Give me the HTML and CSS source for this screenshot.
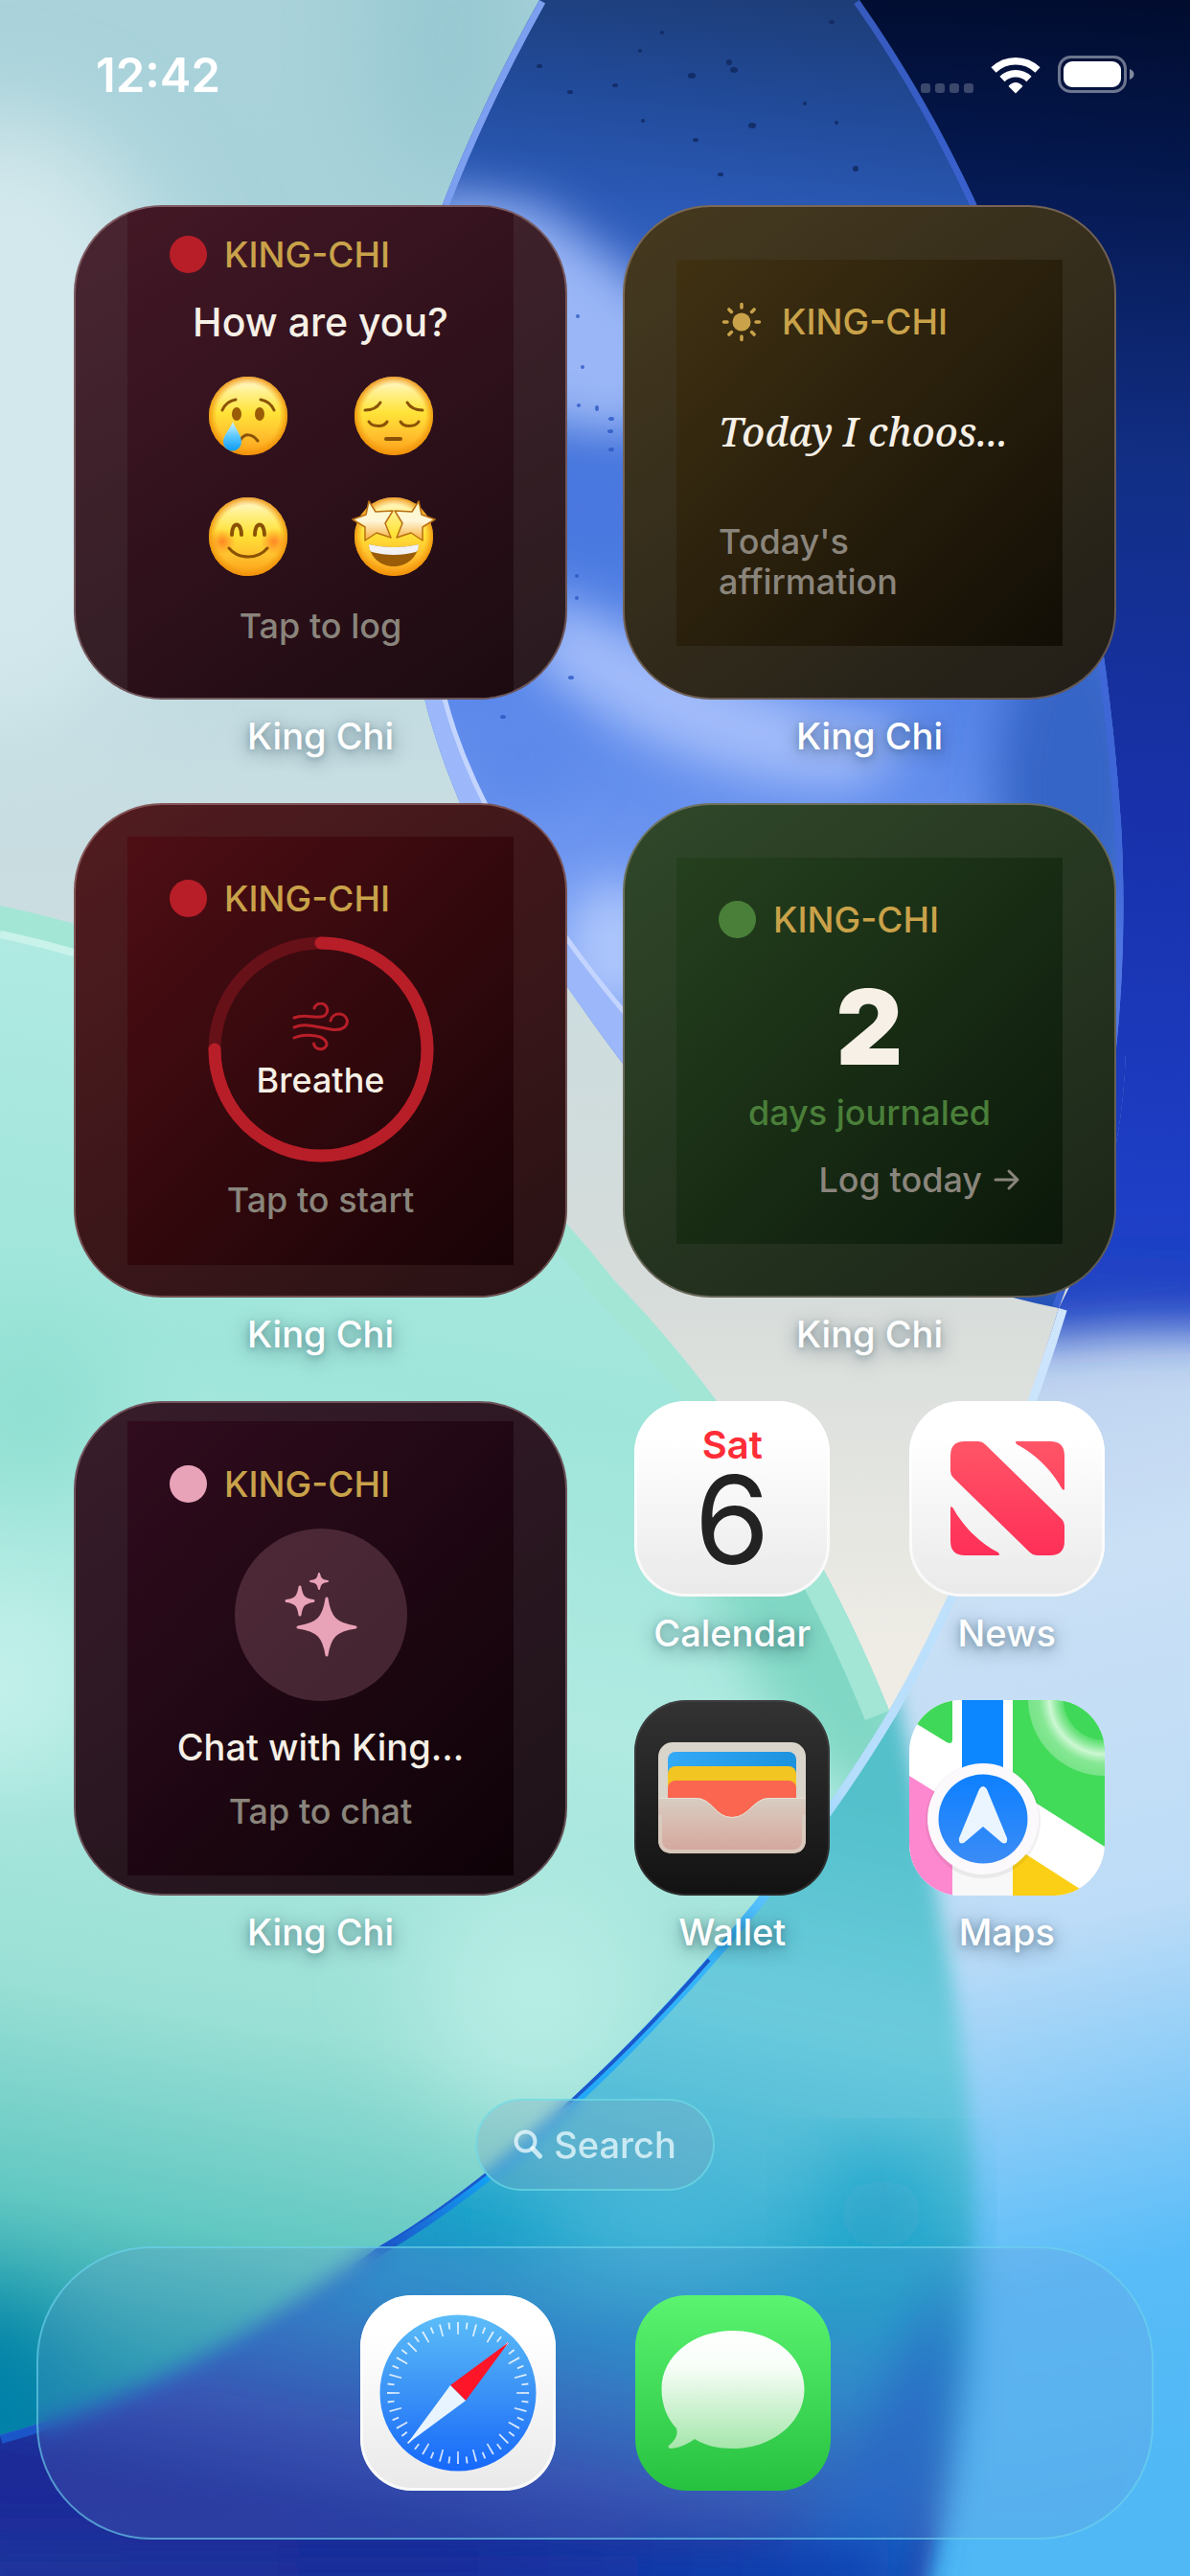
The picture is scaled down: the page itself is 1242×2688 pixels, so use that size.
FILE: index.html
```
<!DOCTYPE html>
<html lang="en">
<head>
  <meta charset="UTF-8" />
  <meta name="viewport" content="width=device-width, initial-scale=1.0"/>
  <title>Home Screen</title>
  <link rel="stylesheet" href="styles.css">
</head>
<body>

<!-- Wallpaper -->
<svg class="wallpaper" viewBox="0 0 1242 2688" preserveAspectRatio="xMidYMid slice" aria-hidden="true">
  <defs>
    <linearGradient id="sky" x1="0" y1="0" x2="0" y2="1">
      <stop offset="0" stop-color="#a9d2da"/>
      <stop offset="0.08" stop-color="#a8d2da"/>
      <stop offset="0.3" stop-color="#c6dde2"/>
      <stop offset="0.5" stop-color="#d6dcda"/>
      <stop offset="0.64" stop-color="#eeece5"/>
    </linearGradient>
    <linearGradient id="leaf" gradientUnits="userSpaceOnUse" x1="840" y1="0" x2="700" y2="1360">
      <stop offset="0" stop-color="#1d3d78"/>
      <stop offset="0.08" stop-color="#214a98"/>
      <stop offset="0.16" stop-color="#2a58b4"/>
      <stop offset="0.26" stop-color="#3a68cc"/>
      <stop offset="0.38" stop-color="#4676dc"/>
      <stop offset="0.55" stop-color="#5a88ea"/>
      <stop offset="0.75" stop-color="#7ba0f4"/>
      <stop offset="1" stop-color="#1a48b0"/>
    </linearGradient>
    <linearGradient id="night" gradientUnits="userSpaceOnUse" x1="1242" y1="0" x2="1160" y2="1400">
      <stop offset="0" stop-color="#010c2e"/>
      <stop offset="0.12" stop-color="#04174c"/>
      <stop offset="0.35" stop-color="#122f86"/>
      <stop offset="0.6" stop-color="#1831aa"/>
      <stop offset="0.9" stop-color="#1d3ec6"/>
      <stop offset="1" stop-color="#2449c4"/>
    </linearGradient>
    <linearGradient id="ice" gradientUnits="userSpaceOnUse" x1="1000" y1="1400" x2="1260" y2="2600">
      <stop offset="0" stop-color="#bcd0ee"/>
      <stop offset="0.2" stop-color="#cae0f5"/>
      <stop offset="0.5" stop-color="#bddcf7"/>
      <stop offset="0.8" stop-color="#58bcf8"/>
      <stop offset="1" stop-color="#4fb8f5"/>
    </linearGradient>
    <linearGradient id="mint" gradientUnits="userSpaceOnUse" x1="420" y1="950" x2="130" y2="2540">
      <stop offset="0" stop-color="#b4ebe4"/>
      <stop offset="0.3" stop-color="#9fe5da"/>
      <stop offset="0.5" stop-color="#b0eae1"/>
      <stop offset="0.72" stop-color="#9be0d6"/>
      <stop offset="0.86" stop-color="#62c8c2"/>
      <stop offset="0.95" stop-color="#24a0b0"/>
      <stop offset="1" stop-color="#0a84a8"/>
    </linearGradient>
    <linearGradient id="orb" gradientUnits="userSpaceOnUse" x1="800" y1="1850" x2="620" y2="2688">
      <stop offset="0" stop-color="#52c0ca"/>
      <stop offset="0.28" stop-color="#6ccbdd"/>
      <stop offset="0.48" stop-color="#4db9d6"/>
      <stop offset="0.6" stop-color="#1ca2c9"/>
      <stop offset="0.72" stop-color="#2387c8"/>
      <stop offset="0.9" stop-color="#2a45ac"/>
      <stop offset="1" stop-color="#1a2c98"/>
    </linearGradient>
    <linearGradient id="edge" gradientUnits="userSpaceOnUse" x1="1100" y1="1360" x2="400" y2="2344">
      <stop offset="0" stop-color="#cfe6fc"/>
      <stop offset="0.45" stop-color="#b4ddfc"/>
      <stop offset="0.6" stop-color="#3db8fb"/>
      <stop offset="0.9" stop-color="#12a0f4"/>
      <stop offset="1" stop-color="#1b56c8"/>
    </linearGradient>
    <linearGradient id="floor" x1="0" y1="0" x2="1" y2="0">
      <stop offset="0" stop-color="#1e389c"/>
      <stop offset="0.5" stop-color="#182c9a"/>
      <stop offset="1" stop-color="#0a47b6"/>
    </linearGradient>
    <filter id="soft10" x="-50%" y="-50%" width="200%" height="200%"><feGaussianBlur stdDeviation="10"/></filter>
    <filter id="soft25" x="-50%" y="-50%" width="200%" height="200%"><feGaussianBlur stdDeviation="25"/></filter>
    <filter id="soft50" x="-50%" y="-50%" width="200%" height="200%"><feGaussianBlur stdDeviation="50"/></filter>
    <clipPath id="leafClip"><path d="M563 0C520 77 487 148 462 213C425 310 418 420 424 560C426 630 432 680 443 729C452 766 465 802 480 838C520 930 590 1030 650 1110C770 1250 930 1330 1105 1365C1160 1220 1180 1030 1170 860C1150 560 1080 260 897 0Z"/></clipPath>
    <clipPath id="mintClip"><path d="M0 945C260 1000 480 1130 640 1335C780 1480 870 1640 928 1785C800 2000 575 2240 396 2344C280 2430 150 2500 0 2541Z"/></clipPath>
    <clipPath id="lowClip"><path d="M1175 1100C1172 1200 1145 1290 1105 1365C1070 1480 1000 1660 928 1785C800 2000 575 2240 396 2344C280 2430 150 2500 0 2541V2688H1242V1100Z"/></clipPath>
  </defs>

  <rect width="1242" height="2688" fill="url(#sky)"/>
  <ellipse cx="0" cy="440" rx="200" ry="320" fill="#d3e8ec" filter="url(#soft50)"/>
  <ellipse cx="470" cy="40" rx="90" ry="160" fill="#98c9d2" filter="url(#soft50)"/>

  <path d="M890 0H1242V1200H1160Z" fill="url(#night)"/>

  <g clip-path="url(#leafClip)">
    <rect x="400" width="800" height="1380" fill="url(#leaf)"/>
    <path d="M450 200L560 215C620 260 690 300 740 380L660 460L560 440L420 300Z" fill="#9ab6f6" filter="url(#soft25)"/>
    <ellipse cx="625" cy="530" rx="70" ry="50" fill="#4a78e0" filter="url(#soft25)"/>
    <path d="M560 620C660 650 800 740 960 760L900 820C780 830 660 780 560 700Z" fill="#a2bcfa" filter="url(#soft25)"/>
    <ellipse cx="545" cy="790" rx="60" ry="50" fill="#5d89ea" filter="url(#soft25)"/>
    <ellipse cx="640" cy="990" rx="50" ry="70" fill="#adc6fc" filter="url(#soft25)"/>
    <ellipse cx="1120" cy="820" rx="80" ry="160" fill="#3565c6" filter="url(#soft25)"/>
    <path d="M563 0C520 77 487 148 462 213" fill="none" stroke="#7d9ff0" stroke-width="14"/>
    <path d="M443 729L464 729C480 790 505 840 540 900C580 970 620 1020 660 1070L650 1110C590 1030 520 930 480 838C465 802 452 766 443 729Z" fill="#9cb7fa"/>
    <path d="M464 729C480 790 505 840 540 900C570 950 600 996 660 1066" fill="none" stroke="#c3d5ff" stroke-width="5"/>
    <path d="M1105 1365C1160 1220 1180 1030 1170 860C1150 560 1080 260 897 0" fill="none" stroke="#4267dc" stroke-width="14" opacity="0.7"/>
    <g fill="#10285f" opacity="0.8">
      <ellipse cx="563" cy="69" rx="3" ry="2"/>
      <ellipse cx="595" cy="96" rx="3" ry="2"/>
      <ellipse cx="642" cy="89" rx="3" ry="2"/>
      <ellipse cx="668" cy="53" rx="2" ry="2"/>
      <ellipse cx="691" cy="34" rx="2" ry="2"/>
      <ellipse cx="722" cy="79" rx="4" ry="3"/>
      <ellipse cx="761" cy="65" rx="3" ry="3"/>
      <ellipse cx="766" cy="73" rx="4" ry="3"/>
      <ellipse cx="785" cy="131" rx="4" ry="3"/>
      <ellipse cx="726" cy="146" rx="3" ry="2"/>
      <ellipse cx="752" cy="182" rx="3" ry="2"/>
      <ellipse cx="671" cy="126" rx="2" ry="2"/>
      <ellipse cx="840" cy="108" rx="2" ry="2"/>
      <ellipse cx="868" cy="23" rx="3" ry="2"/>
      <ellipse cx="873" cy="128" rx="2" ry="2"/>
      <ellipse cx="893" cy="176" rx="3" ry="3"/>
    </g>
    <g fill="#2d58c4" opacity="0.8">
      <ellipse cx="603" cy="330" rx="2" ry="2"/>
      <ellipse cx="608" cy="383" rx="2" ry="2"/>
      <ellipse cx="604" cy="423" rx="2" ry="2"/>
      <ellipse cx="623" cy="426" rx="2" ry="3"/>
      <ellipse cx="638" cy="437" rx="3" ry="2"/>
      <ellipse cx="637" cy="450" rx="3" ry="2"/>
      <ellipse cx="638" cy="469" rx="3" ry="2"/>
      <ellipse cx="602" cy="601" rx="2" ry="2"/>
      <ellipse cx="602" cy="624" rx="2" ry="2"/>
      <ellipse cx="596" cy="707" rx="3" ry="2"/>
      <ellipse cx="525" cy="748" rx="3" ry="2"/>
    </g>
  </g>

  <g clip-path="url(#mintClip)">
    <rect y="900" width="960" height="1680" fill="url(#mint)"/>
    <ellipse cx="30" cy="1470" rx="90" ry="90" fill="#8edfd1" filter="url(#soft50)"/>
    <ellipse cx="0" cy="1760" rx="90" ry="90" fill="#c5f1ec" filter="url(#soft50)"/>
    <ellipse cx="840" cy="1700" rx="70" ry="200" fill="#80d7c4" transform="rotate(-28 840 1700)" filter="url(#soft25)"/>
    <ellipse cx="560" cy="2080" rx="120" ry="120" fill="#b6ece4" filter="url(#soft50)"/>
    <ellipse cx="-20" cy="2500" rx="90" ry="100" fill="#0080a8" filter="url(#soft50)"/>
    <path d="M0 945C260 1000 480 1130 640 1335C780 1480 870 1640 928 1785" fill="none" stroke="#a3e6d6" stroke-width="54"/>
    <path d="M0 975C30 981 60 989 90 998" fill="none" stroke="#c9f3ea" stroke-width="8"/>
  </g>

  <g clip-path="url(#lowClip)">
    <rect y="1100" width="1242" height="1588" fill="url(#ice)"/>
    <path d="M1000 1000H1400V1390H1180L1060 1400Z" fill="url(#night)" filter="url(#soft25)"/>
    <rect x="1000" y="1090" width="300" height="200" fill="url(#night)"/>
    <path d="M0 2300L930 1740C985 2000 1025 2200 1015 2360C1008 2500 985 2620 960 2720H-60Z" fill="url(#orb)" filter="url(#soft10)"/>
    <path d="M800 2688C880 2600 950 2480 990 2340L990 2480L945 2720Z" fill="#1660c4" filter="url(#soft25)"/>
    <ellipse cx="920" cy="2310" rx="60" ry="50" fill="#0899c4" filter="url(#soft50)"/>
    <ellipse cx="690" cy="2320" rx="130" ry="50" fill="#4fbadc" filter="url(#soft50)"/>
    <path d="M-60 2650H930L920 2760H-60Z" fill="url(#floor)" filter="url(#soft25)"/>
    <path d="M1105 1365C1070 1480 1000 1660 928 1785C800 2000 575 2240 396 2344C280 2430 150 2500 0 2541" fill="none" stroke="url(#edge)" stroke-width="18"/>
    <path d="M740 2045C640 2160 510 2278 396 2344C280 2430 150 2500 0 2541" fill="none" stroke="#1c58cc" stroke-width="4"/>
  </g>
</svg>

<div class="screen">
  <header class="status-bar">
    <time class="clock">12:42</time>
    <div class="status-icons">
      <svg width="55" height="40" viewBox="0 0 55 40" aria-label="No signal">
        <g fill="#fff" opacity="0.22">
          <rect x="0" y="29" width="10" height="10" rx="3"/>
          <rect x="15" y="29" width="10" height="10" rx="3"/>
          <rect x="30" y="29" width="10" height="10" rx="3"/>
          <rect x="45" y="29" width="10" height="10" rx="3"/>
        </g>
      </svg>
      <svg width="52" height="40" viewBox="0 0 52 40" aria-label="Wi-Fi">
        <g fill="none" stroke="#fff" stroke-width="7.5">
          <path d="M3 15A33 33 0 0 1 49 15"/>
          <path d="M12 24.500A20 20 0 0 1 40 24.500"/>
        </g>
        <path d="M26 39.500L18.500 32Q22 28 26 28Q30 28 33.500 32Z" fill="#fff"/>
      </svg>
      <svg width="80" height="40" viewBox="0 0 80 40" aria-label="Battery full">
        <rect x="1.500" y="1.500" width="69" height="36" rx="12" fill="none" stroke="#fff" stroke-width="3" opacity="0.42"/>
        <rect x="6" y="6" width="60" height="27" rx="9" fill="#fff"/>
        <path d="M75 14C78 15 79.500 17 79.500 19.500C79.500 22 78 24 75 25Z" fill="#fff" opacity="0.5"/>
      </svg>
    </div>
  </header>

  <main class="apps">
    <!-- Mood widget -->
    <section class="tile tile-wide">
      <div class="widget widget-mood">
        <div class="widget-body">
          <div class="brand"><span class="dot dot-red"></span><span>KING-CHI</span></div>
          <div class="title">How are you?</div>
          <div class="moods">
            <button class="mood" type="button" aria-label="Sad">
              <svg width="88" height="88" viewBox="0 0 88 88">
                <defs>
                  <linearGradient id="face" x1="0" y1="0" x2="0" y2="1">
                    <stop offset="0" stop-color="#fffbe0"/>
                    <stop offset="0.2" stop-color="#fff08c"/>
                    <stop offset="0.46" stop-color="#ffe338"/>
                    <stop offset="0.75" stop-color="#ffc02e"/>
                    <stop offset="1" stop-color="#fb9d15"/>
                  </linearGradient>
                  <radialGradient id="faceEdge">
                    <stop offset="0.8" stop-color="#f49a0c" stop-opacity="0"/>
                    <stop offset="1" stop-color="#ee8f08" stop-opacity="0.9"/>
                  </radialGradient>
                  <linearGradient id="tear" x1="0" y1="0" x2="0" y2="1">
                    <stop offset="0" stop-color="#d3f3ff"/>
                    <stop offset="0.5" stop-color="#5cc8ff"/>
                    <stop offset="1" stop-color="#0d9cf5"/>
                  </linearGradient>
                </defs>
                <circle cx="44" cy="44" r="41" fill="url(#face)"/>
                <circle cx="44" cy="44" r="41" fill="url(#faceEdge)"/>
                <g fill="none" stroke="#8a5206" stroke-width="3" stroke-linecap="round">
                  <path d="M17 38C20 31 25 28 31 27"/>
                  <path d="M57 27C63 28 68 31 71 38"/>
                  <path d="M36 69C40 62 48 62 54 70"/>
                </g>
                <ellipse cx="32" cy="42" rx="5" ry="7" fill="#9a5c06"/>
                <ellipse cx="56" cy="42" rx="5" ry="7" fill="#9a5c06"/>
                <path d="M28 50C31 58 37 64 37 71A9.500 9.500 0 0 1 18 71C18 64 25 58 28 50Z" fill="url(#tear)"/>
              </svg>
            </button>
            <button class="mood" type="button" aria-label="Pensive">
              <svg width="88" height="88" viewBox="0 0 88 88">
                <circle cx="44" cy="44" r="41" fill="url(#face)"/>
                <circle cx="44" cy="44" r="41" fill="url(#faceEdge)"/>
                <g fill="none" stroke="#8a5206" stroke-width="3" stroke-linecap="round">
                  <path d="M14 38C21 38 27 35 30 30"/>
                  <path d="M58 30C61 35 67 38 74 38"/>
                  <path d="M18 50C22 56 34 56 37 50"/>
                  <path d="M51 50C54 56 66 56 70 50"/>
                  <path d="M36 68H51" stroke-width="4"/>
                </g>
              </svg>
            </button>
            <button class="mood" type="button" aria-label="Happy">
              <svg width="88" height="88" viewBox="0 0 88 88">
                <defs>
                  <radialGradient id="blush">
                    <stop offset="0" stop-color="#ff6a1e" stop-opacity="0.75"/>
                    <stop offset="1" stop-color="#ff7a1e" stop-opacity="0"/>
                  </radialGradient>
                </defs>
                <circle cx="44" cy="44" r="41" fill="url(#face)"/>
                <circle cx="44" cy="44" r="41" fill="url(#faceEdge)"/>
                <circle cx="17" cy="49" r="14" fill="url(#blush)"/>
                <circle cx="71" cy="49" r="14" fill="url(#blush)"/>
                <g fill="none" stroke="#8a5206" stroke-linecap="round">
                  <path d="M27 42C27 28 37 28 37 42" stroke-width="4"/>
                  <path d="M51 42C51 28 61 28 61 42" stroke-width="4"/>
                  <path d="M24 56C34 68 54 68 64 56" stroke-width="3"/>
                </g>
              </svg>
            </button>
            <button class="mood" type="button" aria-label="Excited">
              <svg width="88" height="88" viewBox="0 0 88 88">
                <defs>
                  <linearGradient id="star" x1="0" y1="0" x2="0" y2="1">
                    <stop offset="0" stop-color="#fff9c8"/>
                    <stop offset="0.5" stop-color="#fff6d8"/>
                    <stop offset="1" stop-color="#f7ae3a"/>
                  </linearGradient>
                </defs>
                <circle cx="44" cy="44" r="41" fill="url(#face)"/>
                <circle cx="44" cy="44" r="41" fill="url(#faceEdge)"/>
                <path d="M18 52C35 56 53 56 70 52C69 65 58 75 44 75C30 75 19 65 18 52Z" fill="#9a5c06"/>
                <path d="M18 52C35 56 53 56 70 52C70 56 69 59 67 60C52 64 36 64 21 60C19 59 18 56 18 52Z" fill="#f2f2f5"/>
                <g fill="url(#star)" stroke="#b96f12" stroke-width="1.500" stroke-linejoin="round">
                  <path d="M18 7L25 18L43 17L35 30L41 45L26 40L14 48L14 34L1 26L15 21Z"/>
                  <path d="M70 7L63 18L45 17L53 30L47 45L62 40L74 48L74 34L87 26L73 21Z"/>
                </g>
              </svg>
            </button>
          </div>
          <div class="hint">Tap to log</div>
        </div>
      </div>
      <span class="label">King Chi</span>
    </section>

    <!-- Affirmation widget -->
    <a class="tile tile-wide" href="#affirmation">
      <div class="widget widget-affirmation">
        <div class="widget-body">
          <div class="brand">
            <svg width="48" height="44" viewBox="0 0 48 44" aria-hidden="true">
              <circle cx="24" cy="22" r="9.500" fill="#c9a24a"/>
              <g stroke="#c9a24a" stroke-width="3.500" stroke-linecap="round">
                <path d="M24 3.500V7M24 37V40.500M5.500 22H9M39 22H42.500M10.900 8.900L13.400 11.400M34.600 32.600L37.100 35.100M10.900 35.100L13.400 32.600M34.600 11.400L37.100 8.900"/>
              </g>
            </svg>
            <span>KING-CHI</span>
          </div>
          <div class="quote">Today I choos...</div>
          <div class="hint hint-left">Today's affirmation</div>
        </div>
      </div>
      <span class="label">King Chi</span>
    </a>

    <!-- Breathe widget -->
    <a class="tile tile-wide" href="#breathe">
      <div class="widget widget-breathe">
        <div class="widget-body">
          <div class="brand"><span class="dot dot-red"></span><span>KING-CHI</span></div>
          <div class="ring">
            <svg class="ring-track" width="236" height="236" viewBox="0 0 236 236" aria-hidden="true">
              <g fill="none" stroke="#b81e28" stroke-width="13">
                <circle cx="118" cy="118" r="111" opacity="0.35"/>
                <path d="M118 7A111 111 0 1 1 7 118" stroke-linecap="round"/>
              </g>
            </svg>
            <svg width="60" height="52" viewBox="0 0 60 52" aria-hidden="true">
              <g fill="none" stroke="#b81e28" stroke-width="3" stroke-linecap="round">
                <path d="M2 16C12 12 20 16 29 15A7 7 0 1 0 23 6"/>
                <path d="M2 26C14 21 27 26 40 28C51 30 57.500 26 57.500 19A9 9 0 0 0 40 19"/>
                <path d="M2 37C10 33 19 34 25 35C32 36 36 40 36 44A7 7 0 0 1 22.500 43"/>
              </g>
            </svg>
            <span class="ring-text">Breathe</span>
          </div>
          <div class="hint">Tap to start</div>
        </div>
      </div>
      <span class="label">King Chi</span>
    </a>

    <!-- Journal widget -->
    <a class="tile tile-wide" href="#journal">
      <div class="widget widget-journal">
        <div class="widget-body">
          <div class="brand"><span class="dot dot-green"></span><span>KING-CHI</span></div>
          <div class="streak">
            <span class="count">2</span>
            <span class="count-text">days journaled</span>
          </div>
          <div class="hint hint-right">
            <span>Log today</span>
            <svg width="28" height="24" viewBox="0 0 28 24" aria-hidden="true">
              <path d="M2 12H25M16 3L25 12L16 21" fill="none" stroke="#8a857c" stroke-width="3" stroke-linecap="round" stroke-linejoin="round"/>
            </svg>
          </div>
        </div>
      </div>
      <span class="label">King Chi</span>
    </a>

    <!-- Chat widget -->
    <a class="tile tile-wide" href="#chat">
      <div class="widget widget-chat">
        <div class="widget-body">
          <div class="brand"><span class="dot dot-pink"></span><span>KING-CHI</span></div>
          <div class="bubble">
            <svg width="80" height="88" viewBox="0 0 80 88" aria-hidden="true">
              <g fill="#e9a3b8" stroke="#e9a3b8" stroke-width="3" stroke-linejoin="round">
                <path d="M46 27C49 47 55 54 76 57C55 60 49 67 46 86C43 67 37 60 16 57C37 54 43 47 46 27Z"/>
                <path d="M18 15C19.500 25 22 28 32 29.500C22 31 19.500 34 18 44C16.500 34 14 31 4 29.500C14 28 16.500 25 18 15Z"/>
                <path d="M38 1C39 6.500 40.500 8 47 9C40.500 10 39 11.500 38 17C37 11.500 35.500 10 29 9C35.500 8 37 6.500 38 1Z" stroke-width="2"/>
              </g>
            </svg>
          </div>
          <div class="title title-small">Chat with King...</div>
          <div class="hint">Tap to chat</div>
        </div>
      </div>
      <span class="label">King Chi</span>
    </a>

    <a class="tile" href="#calendar">
      <div class="icon icon-light icon-calendar">
        <span class="day-name">Sat</span>
        <span class="day-number">6</span>
      </div>
      <span class="label">Calendar</span>
    </a>

    <a class="tile" href="#news">
      <div class="icon icon-light">
        <svg viewBox="0 0 204 204" aria-hidden="true">
          <defs>
            <linearGradient id="news" gradientUnits="userSpaceOnUse" x1="0" y1="42" x2="0" y2="161">
              <stop offset="0" stop-color="#ff5567"/>
              <stop offset="1" stop-color="#ff2f58"/>
            </linearGradient>
          </defs>
          <g fill="url(#news)">
            <path d="M58 42H72Q76 42 79 45L159 123Q162 126 162 130V146Q162 161 147 161H133Q129 161 126 158L46 80Q43 77 43 73V57Q43 42 58 42Z"/>
            <path d="M112 42H147Q162 42 162 57V92Q161 94 159 91C150 74 132 55 112 45Q110 42 112 42Z"/>
            <path d="M93 161H58Q43 161 43 146V111Q44 109 46 112C55 129 73 148 93 158Q95 161 93 161Z"/>
          </g>
        </svg>
      </div>
      <span class="label">News</span>
    </a>

    <a class="tile" href="#wallet">
      <div class="icon icon-wallet">
        <svg viewBox="0 0 204 204" aria-hidden="true">
          <defs>
            <linearGradient id="pocket" x1="0" y1="0" x2="0" y2="1">
              <stop offset="0" stop-color="#d8cdc2"/>
              <stop offset="0.5" stop-color="#d8b9ae"/>
              <stop offset="1" stop-color="#d3a69b"/>
            </linearGradient>
            <linearGradient id="cardBlue" x1="0" y1="0" x2="1" y2="0">
              <stop offset="0" stop-color="#33aaf6"/>
              <stop offset="1" stop-color="#1c92df"/>
            </linearGradient>
          </defs>
          <rect x="25" y="44" width="154" height="116" rx="15" fill="#dad5cb"/>
          <rect x="35" y="54" width="134" height="60" rx="8" fill="url(#cardBlue)"/>
          <rect x="35" y="69" width="134" height="60" rx="8" fill="#f3c522"/>
          <rect x="35" y="84" width="134" height="60" rx="8" fill="#fa664f"/>
          <path d="M25 102H64C82 102 84 122 102 122C120 122 124 102 141 102H179V145Q179 160 164 160H40Q25 160 25 145Z" fill="url(#pocket)"/>
          <path d="M26 102.500H64C82 102.500 84 122.500 102 122.500C120 122.500 124 102.500 141 102.500H178" fill="none" stroke="#e9ded3" stroke-width="1"/>
          <path d="M27 120V145Q27 158 40 158H164Q177 158 177 145V120" fill="none" stroke="#d9cec3" stroke-width="4" opacity="0.8"/>
        </svg>
      </div>
      <span class="label">Wallet</span>
    </a>

    <a class="tile" href="#maps">
      <div class="icon icon-maps">
        <svg viewBox="0 0 204 204" aria-hidden="true">
          <defs>
            <radialGradient id="halo">
              <stop offset="0.54" stop-color="#baf3c4" stop-opacity="0.2"/>
              <stop offset="0.72" stop-color="#d5f9da" stop-opacity="0.95"/>
              <stop offset="0.85" stop-color="#b2f0ba" stop-opacity="0.6"/>
              <stop offset="1" stop-color="#9aeaa6" stop-opacity="0.6"/>
            </radialGradient>
            <linearGradient id="pin" x1="0" y1="0" x2="0" y2="1">
              <stop offset="0" stop-color="#0d80ff"/>
              <stop offset="1" stop-color="#3b8cf6"/>
            </linearGradient>
          </defs>
          <rect width="204" height="204" fill="#fff"/>
          <path d="M0 0H45V41Q45 47 39 44L0 20Z" fill="#40d858"/>
          <rect x="55" width="43" height="90" fill="#0d87ff"/>
          <path d="M108 0H204V153L108 92Z" fill="#42da59"/>
          <circle cx="204" cy="-1" r="80" fill="url(#halo)"/>
          <circle cx="204" cy="-1" r="43" fill="#40d858"/>
          <path d="M0 79L45 107V204H0Z" fill="#fd88cf"/>
          <path d="M45 110H108V204H45Z" fill="#f8f8f8"/>
          <path d="M108 152L178 197V204H108Z" fill="#fbcf16"/>
          <circle cx="77" cy="126" r="60" fill="#000" opacity="0.06"/>
          <circle cx="77" cy="124" r="58" fill="#fbf9fc"/>
          <circle cx="77" cy="124" r="46.500" fill="url(#pin)"/>
          <path d="M73 93Q77 87 81 93L102 144Q103 151 97 149L77 132L57 149Q51 151 52 144Z" fill="#eaf5ff"/>
        </svg>
      </div>
      <span class="label">Maps</span>
    </a>
  </main>

  <button class="search" type="button">
    <svg width="30" height="32" viewBox="0 0 30 32" aria-hidden="true">
      <g fill="none" stroke="currentColor" stroke-width="4" stroke-linecap="round">
        <circle cx="12.500" cy="12.500" r="10"/>
        <path d="M20 20L27.500 28" stroke-width="5"/>
      </g>
    </svg>
    <span>Search</span>
  </button>

  <nav class="dock" aria-label="Dock">
    <a class="icon icon-light" href="#safari" aria-label="Safari">
      <svg viewBox="0 0 204 204" aria-hidden="true">
        <defs>
          <linearGradient id="compass" x1="0" y1="0" x2="0" y2="1">
            <stop offset="0" stop-color="#5cbdf8"/>
            <stop offset="0.5" stop-color="#3a92f6"/>
            <stop offset="1" stop-color="#1668fb"/>
          </linearGradient>
        </defs>
        <circle cx="102" cy="102" r="81.500" fill="url(#compass)"/>
        <g fill="none" stroke="#fff" opacity="0.8">
          <circle cx="102" cy="102" r="67.500" stroke-width="13" pathLength="240" stroke-dasharray="1 9" stroke-dashoffset="0.5"/>
          <circle cx="102" cy="102" r="70.500" stroke-width="7" pathLength="240" stroke-dasharray="1 9" stroke-dashoffset="5.500"/>
        </g>
        <path d="M155 49L110 110L94 94Z" fill="#ff1528"/>
        <path d="M49 155L94 94L110 110Z" fill="#e8f4ff"/>
      </svg>
    </a>
    <a class="icon icon-messages" href="#messages" aria-label="Messages">
      <svg viewBox="0 0 204 204" aria-hidden="true">
        <defs>
          <linearGradient id="chat" x1="0" y1="0" x2="0" y2="1">
            <stop offset="0" stop-color="#fff"/>
            <stop offset="0.3" stop-color="#f8fef8"/>
            <stop offset="1" stop-color="#a5e6ab"/>
          </linearGradient>
        </defs>
        <path d="M102 37C143 37 176.500 63 176.500 98C176.500 133 143 160 102 160C87 160 73 157 62 150C54 156 44 160 36 160Q33 158 36 156C42 151 45 145 43 139C33 128 27.500 114 27.500 98C27.500 63 61 37 102 37Z" fill="url(#chat)"/>
      </svg>
    </a>
  </nav>
</div>

</body>
</html>
```
FILE: styles.css
```
* { box-sizing: border-box; }
body {
  margin: 0;
  position: relative;
  min-height: 100vh;
  overflow-x: hidden;
  background: #1c2f9a;
  font-family: Inter, "Liberation Sans", sans-serif;
  font-weight: 500;
  color: #fff;
}
a { color: inherit; text-decoration: none; }
svg { display: block; }

.wallpaper {
  position: absolute; top: 0; left: 0; z-index: -1;
  width: 100%; height: 100%;
}
.screen {
  display: flex; flex-direction: column; align-items: center;
  min-height: 100vh;
  padding: 0 38px 38px;
}

/* Status bar */
.status-bar {
  display: flex; justify-content: space-between; align-items: center;
  width: 100%; height: 156px;
  padding: 0 20px 0 62px;
  margin-bottom: 58px;
}
.clock { font-size: 49px; font-weight: 600; }
.status-icons { display: flex; gap: 18px; }

/* App grid */
.apps {
  display: grid;
  grid-template-columns: repeat(4, 1fr);
  grid-auto-rows: 266px;
  gap: 46px 58px;
  width: 100%;
  padding: 0 39px;
}
.tile {
  display: flex; flex-direction: column; align-items: center;
  gap: 15px;
}
.tile-wide { grid-column: span 2; grid-row: span 2; }
.label {
  font-size: 38px; line-height: 46px;
  text-shadow: 0 4px 18px rgba(0,40,60,0.5), 0 2px 6px rgba(0,40,60,0.2);
}

/* Widgets */
.widget {
  display: flex; flex-direction: column; justify-content: center;
  width: 100%; height: 516px;
  padding: 0 54px;
  border: 2px solid rgba(255,220,220,0.3);
  border-radius: 92px;
  overflow: hidden;
  background-origin: border-box;
}
.widget-body {
  display: flex; flex-direction: column; flex-shrink: 0;
  min-height: 403px;
  padding: 44px;
}
.widget-mood { background-image: linear-gradient(150deg, #4a2531, #281a1e); }
.widget-mood .widget-body { background: linear-gradient(145deg, #441826, #1b0a10); height: 544px; }
.widget-affirmation { background-image: linear-gradient(145deg, #463a1f, #211e18); }
.widget-affirmation .widget-body { background: linear-gradient(135deg, #403112, #120e06); }
.widget-breathe { background-image: linear-gradient(145deg, #521c20, #281214); }
.widget-breathe .widget-body { background: linear-gradient(135deg, #4e0e14, #180306); height: 447px; }
.widget-journal { background-image: linear-gradient(145deg, #30482a, #1c2417); }
.widget-journal .widget-body { background: linear-gradient(135deg, #25401e, #0b180a); }
.widget-chat { background-image: linear-gradient(145deg, #381c2a, #1d1218); }
.widget-chat .widget-body { background: linear-gradient(135deg, #300c1e, #0e0207); height: 474px; }

.brand {
  display: flex; align-items: center; gap: 18px;
  height: 42px;
  font-size: 37px; color: #c9a24a;
}
.dot { width: 39px; height: 39px; border-radius: 50%; }
.dot-red { background: #b81e28; }
.dot-green { background: #4a7f3a; }
.dot-pink { background: #e9a3b8; }

.title {
  font-size: 41px; line-height: 48px;
  text-align: center; white-space: nowrap;
  color: #f6f0e6;
}
.title-small { font-size: 38px; margin-bottom: 22px; }
.hint {
  font-size: 36px; line-height: 42px;
  text-align: center;
  color: #8a857c;
}
.hint-left { text-align: left; }
.hint-right { display: flex; justify-content: flex-end; align-items: center; gap: 12px; }

.widget-mood .title { margin-top: 26px; }
.moods {
  display: grid;
  grid-template-columns: 88px 88px;
  justify-content: center;
  gap: 38px 64px;
  margin: 30px 0 28px;
}
.mood {
  width: 88px; height: 88px;
  padding: 0; border: none; background: none;
  cursor: pointer;
}

.widget-affirmation .widget-body,
.widget-journal .widget-body { justify-content: space-between; padding-bottom: 46px; }
.quote {
  font-family: "Noto Serif", "Liberation Serif", serif;
  font-style: italic;
  font-size: 41px; line-height: 52px;
  white-space: nowrap;
  color: #f6f0e6;
}

.ring {
  position: relative;
  display: flex; flex-direction: column; align-items: center; justify-content: center;
  gap: 8px;
  width: 236px; height: 236px;
  margin: 18px auto;
  padding-top: 4px;
}
.ring-track { position: absolute; top: 0; left: 0; }
.ring-text { font-size: 36px; line-height: 42px; color: #f6f0e6; }

.streak { display: flex; flex-direction: column; align-items: center; gap: 10px; padding-top: 6px; }
.count { font-size: 108px; font-weight: 900; line-height: 116px; color: #f6f0e6; }
.count-text { font-size: 36px; line-height: 42px; white-space: nowrap; color: #4a7f3a; }

.bubble {
  display: flex; align-items: center; justify-content: center;
  width: 180px; height: 180px;
  margin: 26px auto 24px;
  border-radius: 50%;
  background: rgba(233,163,184,0.2);
}

/* App icons */
.icon {
  width: 204px; height: 204px;
  border-radius: 54px;
  overflow: hidden;
}
.icon svg { width: 100%; height: 100%; }
.icon-light {
  background: linear-gradient(#fff, #fff 20%, #e9e9ea);
  box-shadow: inset 0 0 0 3px rgba(255,255,255,0.7);
}
.icon-wallet {
  background: linear-gradient(#333, #121212);
  box-shadow: inset 0 0 0 2px rgba(80,80,80,0.4);
}
.icon-messages { background: linear-gradient(#5af471, #27c140); }
.icon-calendar { display: flex; flex-direction: column; align-items: center; }
.day-name { margin-top: 22px; font-size: 40px; line-height: 48px; font-weight: 600; color: #ff2d37; }
.day-number { font-size: 127px; line-height: 108px; font-weight: 400; color: #222; }

/* Search and dock */
.search {
  display: flex; align-items: center; gap: 12px;
  height: 96px;
  margin-top: 150px;
  padding: 0 38px;
  border: 2px solid rgba(110,225,235,0.6);
  border-radius: 48px;
  background: rgba(130,165,190,0.3);
  backdrop-filter: blur(8px);
  font: inherit; font-size: 38px;
  color: rgba(240,252,255,0.75);
  cursor: pointer;
}
.dock {
  display: flex; align-items: center; justify-content: center; gap: 83px;
  width: 100%; height: 306px;
  margin-top: auto;
  border: 2px solid rgba(110,215,240,0.6);
  border-radius: 120px;
  background: rgba(120,145,205,0.18);
  backdrop-filter: blur(12px);
}
```
